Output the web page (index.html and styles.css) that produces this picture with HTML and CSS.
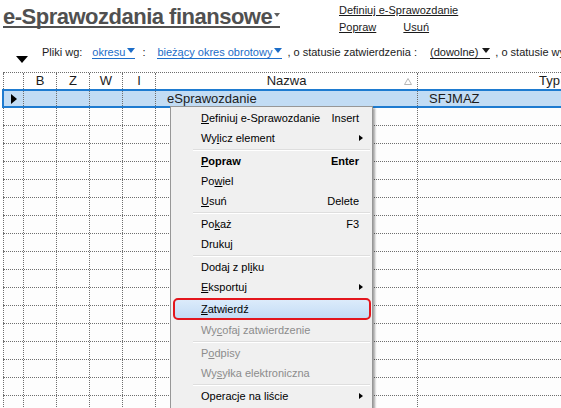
FILE: index.html
```html
<!DOCTYPE html>
<html lang="pl">
<head>
  <meta charset="UTF-8" />
  <title>e-Sprawozdania finansowe</title>
  <link rel="stylesheet" href="styles.css">
</head>
<body>

  <!-- Header -->
  <div class="head">
    <div class="title-box">
      <a class="title" href="#">e-Sprawozdania finansowe<span class="title-caret"></span></a>
    </div>
    <div class="actions">
      <a href="#">Definiuj e-Sprawozdanie</a>
      <div class="actions-row">
        <a href="#">Popraw</a>
        <a href="#">Usuń</a>
      </div>
    </div>
  </div>

  <!-- Filters -->
  <div class="filters">
    <span class="big-caret"></span>
    <span class="lbl">Pliki wg:</span>
    <a class="pick blue m-okres" href="#">okresu<i class="caret"></i></a>
    <span class="lbl m-colon">:</span>
    <a class="pick blue m-biez" href="#">bieżący okres obrotowy<i class="caret"></i></a>
    <span class="lbl m-stat">, o statusie zatwierdzenia :</span>
    <a class="pick dark m-dow" href="#">(dowolne)<i class="caret"></i></a>
    <span class="lbl m-stat2">, o statusie wy</span>
  </div>

  <!-- Grid -->
  <div class="grid" id="grid">
    <div class="row top">
      <div class="c c1"></div>
      <div class="c c2">B</div>
      <div class="c c2">Z</div>
      <div class="c c2">W</div>
      <div class="c c2">I</div>
      <div class="c c6 sortable">Nazwa
        <svg class="sort" width="8" height="7" viewBox="0 0 8 7"><polygon points="4,0.5 7.5,6.5 0.5,6.5" fill="#fff" stroke="#b5b5b5"/></svg>
      </div>
      <div class="c c7">Typ</div>
    </div>
    <div class="row sel">
      <div class="c c1"><span class="pointer"></span></div>
      <div class="c c2"></div>
      <div class="c c2"></div>
      <div class="c c2"></div>
      <div class="c c2"></div>
      <div class="c c6 txt">eSprawozdanie</div>
      <div class="c c7 txt">SFJMAZ</div>
    </div>
  </div>

  <!-- Context menu -->
  <div class="menu">
    <div class="mi"><span><u>D</u>efiniuj e-Sprawozdanie</span><span class="key">Insert</span></div>
    <div class="mi"><span>Wy<u>l</u>icz element</span><span class="sub"></span></div>
    <div class="sep"></div>
    <div class="mi bold"><span><u>P</u>opraw</span><span class="key">Enter</span></div>
    <div class="mi"><span>Po<u>w</u>iel</span></div>
    <div class="mi"><span><u>U</u>suń</span><span class="key">Delete</span></div>
    <div class="sep"></div>
    <div class="mi"><span>Po<u>k</u>aż</span><span class="key">F3</span></div>
    <div class="mi"><span>Druku<u>j</u></span></div>
    <div class="sep"></div>
    <div class="mi"><span>Dodaj z pl<u>i</u>ku</span></div>
    <div class="mi"><span><u>E</u>ksportuj</span><span class="sub"></span></div>
    <div class="hl-wrap">
      <div class="hl"><span><u>Z</u>atwierdź</span></div>
    </div>
    <div class="mi off"><span>Wy<u>c</u>ofaj zatwierdzenie</span></div>
    <div class="sep"></div>
    <div class="mi off"><span>P<u>o</u>dpisy</span></div>
    <div class="mi off"><span>Wy<u>s</u>yłka elektroniczna</span></div>
    <div class="sep"></div>
    <div class="mi"><span>Operacje na liście</span><span class="sub"></span></div>
  </div>

  <script>
    // Empty rows below the selected one
    const grid = document.getElementById('grid');
    for (let i = 0; i < 17; i++) {
      const row = document.createElement('div');
      row.className = 'row';
      row.innerHTML = `
        <div class="c c1"></div>
        <div class="c c2"></div>
        <div class="c c2"></div>
        <div class="c c2"></div>
        <div class="c c2"></div>
        <div class="c c6"></div>
        <div class="c c7"></div>
      `;
      grid.appendChild(row);
    }
  </script>

</body>
</html>
```

FILE: styles.css
```css
:root {
  --grid-line: #6e6e6e;
  --link-blue: #1c6dc8;
  --sel-blue: #1e7bd0;
  --text: #1b1b1b;
}

* {
  box-sizing: border-box;
}

body {
  margin: 0;
  width: 561px;
  height: 408px;
  overflow: hidden;
  position: relative;
  font-family: "Liberation Sans", Arial, sans-serif;
  color: var(--text);
  background: #fff;
}

a {
  color: inherit;
}

/* Header */
.head {
  display: flex;
  height: 40px;
}

.title-box {
  width: 339px;
  padding: 7px 0 0 3px;
}

.title {
  display: inline-flex;
  align-items: flex-start;
  font-size: 22px;
  font-weight: bold;
  letter-spacing: -0.5px;
  line-height: 19px;
  color: #505050;
  text-decoration: none;
  border-bottom: 2px solid #505050;
}

.title-caret {
  margin: 6px 0 0 2px;
  border-top: 4px solid #606060;
  border-left: 3.5px solid transparent;
  border-right: 3.5px solid transparent;
}

.actions {
  padding-top: 2px;
  font-size: 11px;
  line-height: 17px;
}

.actions a {
  color: #1a1a1a;
}

.actions-row a + a {
  margin-left: 24px;
}

/* Filters */
.filters {
  display: flex;
  align-items: baseline;
  height: 32px;
  padding: 4px 0 0 16px;
  font-size: 11px;
  line-height: 17px;
  white-space: nowrap;
}

.big-caret {
  align-self: flex-start;
  margin-top: 12px;
  border-top: 7px solid #000;
  border-left: 6.5px solid transparent;
  border-right: 6.5px solid transparent;
}

.lbl {
  margin-left: 14px;
}

.pick {
  display: inline-block;
  line-height: 12px;
  text-decoration: none;
  border-bottom: 1px solid;
}

.pick.blue {
  color: var(--link-blue);
}

.pick.dark {
  color: #1a1a1a;
}

.caret {
  display: inline-block;
  vertical-align: 3px;
  margin-left: 2px;
  border-top: 5px solid;
  border-left: 4px solid transparent;
  border-right: 4px solid transparent;
}

.m-okres { margin-left: 10px; }
.lbl.m-colon { margin-left: 7px; }
.m-biez { margin-left: 12px; }
.lbl.m-stat { margin-left: 5px; }
.m-dow { margin-left: 13px; }
.m-dow .caret { margin-left: 4px; }
.lbl.m-stat2 { margin-left: 5px; }

/* Grid */
.grid {
  margin-left: 3px;
  width: 700px;
  border-top: 1px dotted var(--grid-line);
  font-size: 13px;
}

.row {
  display: flex;
  height: 18px;
  border-bottom: 1px dotted var(--grid-line);
  background: #fdfdfd;
}

.row.top {
  height: 16px;
  border-bottom: none;
  background: #fff;
}

.row.sel {
  height: 19px;
  margin-left: -1px;
  border: 2px solid var(--sel-blue);
  border-right: none;
  background: #c2dcf4;
}

.c {
  flex: none;
  border-right: 1px dotted var(--grid-line);
  line-height: 16px;
  text-align: center;
  white-space: nowrap;
  overflow: hidden;
}

.row.sel .c {
  line-height: 15px;
}

.c1 {
  width: 21px;
  border-left: 1px dotted var(--grid-line);
}

.row.sel .c1 {
  width: 20px;
  border-left: none;
  display: flex;
  align-items: center;
  justify-content: center;
}

.c2 {
  width: 33px;
}

.c6 {
  width: 262px;
}

.c7 {
  width: 264px;
}

.c.txt {
  text-align: left;
  padding-left: 11px;
}

.sortable {
  position: relative;
}

.sort {
  position: absolute;
  right: 5px;
  top: 5px;
}

.pointer {
  border-left: 6px solid #000;
  border-top: 5px solid transparent;
  border-bottom: 5px solid transparent;
}

/* Context menu */
.menu {
  position: absolute;
  left: 170px;
  top: 106px;
  width: 203px;
  height: 320px;
  padding-top: 1px;
  background: #f0f0f0;
  border: 1px solid #979797;
  box-shadow: 2px 2px 2px rgba(0, 0, 0, 0.35);
  font-size: 11px;
  color: #000;
}

.mi {
  display: flex;
  align-items: center;
  height: 20px;
  padding: 0 13px 0 30px;
  white-space: nowrap;
}

.mi.bold {
  font-weight: bold;
}

.mi.off {
  color: #8c8c8c;
}

.key {
  margin-left: auto;
}

.sub {
  margin-left: auto;
  margin-right: -4px;
  border-left: 4px solid #000;
  border-top: 3.5px solid transparent;
  border-bottom: 3.5px solid transparent;
}

.sep {
  margin: 1px 2px 0 22px;
  border-top: 1px solid #dedede;
  border-bottom: 1px solid #fff;
}

.hl-wrap {
  padding: 1px 1px 0 2px;
}

.hl {
  display: flex;
  align-items: center;
  height: 22px;
  padding-left: 26px;
  border: 2px solid #e3161d;
  border-radius: 5px;
  background: linear-gradient(#dcebfb, #c3dcf5);
}
```
